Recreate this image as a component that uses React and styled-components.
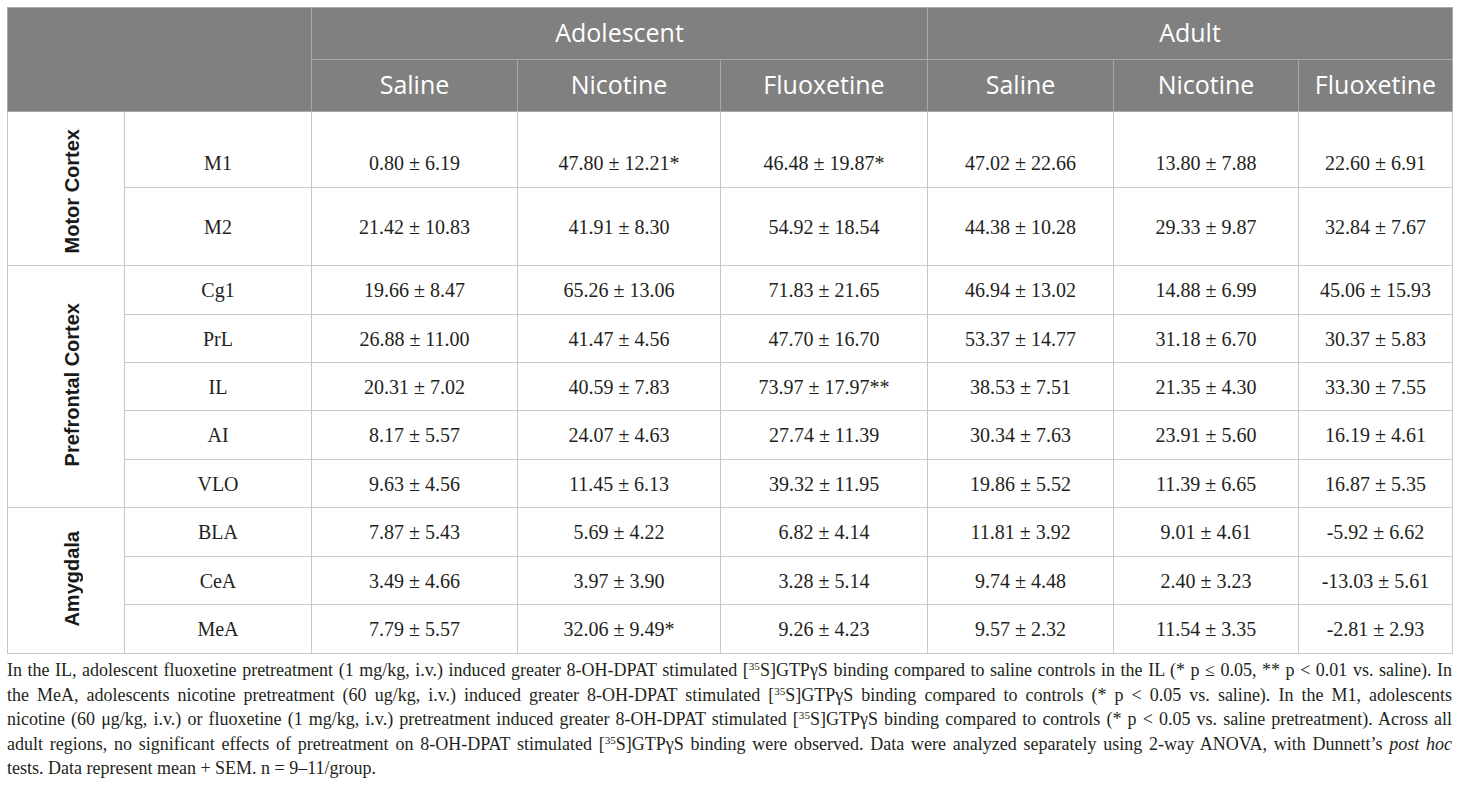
import React from "react";
import styled, { createGlobalStyle } from "styled-components";

const GlobalStyle = createGlobalStyle`
  html, body { margin: 0; padding: 0; background: #ffffff; }
  body { font-family: "Liberation Serif", "Times New Roman", serif; }
`;

const Page = styled.div`
  padding: 7px 8px 0 7px;
  width: 1445px;
`;

const Table = styled.table`
  width: 1445px;
  border-collapse: collapse;
  table-layout: fixed;
`;

const HeadCell = styled.th`
  background: #808080;
  color: #ffffff;
  font-family: "Open Sans", "Noto Sans", sans-serif;
  font-weight: 400;
  font-size: 25px;
  line-height: 30px;
  text-align: center;
  vertical-align: middle;
  border: 1px solid #a8a8a8;
  padding: 0 0 4px 0;
`;

const HeadRow = styled.tr`
  height: 52px;
`;

const BodyRow = styled.tr`
  height: ${(p) => p.$h}px;
  & > td {
    vertical-align: ${(p) => (p.$lower ? "bottom" : "middle")};
    padding-bottom: ${(p) => (p.$lower ? "12px" : "0")};
  }
`;

const GroupCell = styled.th`
  border: 1px solid #c8c8c8;
  padding: ${(p) => p.$shift || 0}px 0 0 13px;
  text-align: center;
  vertical-align: middle;
`;

const GroupLabel = styled.span`
  display: inline-block;
  writing-mode: vertical-rl;
  transform: rotate(180deg);
  font-family: "Liberation Sans", Arial, sans-serif;
  font-weight: 700;
  font-size: 20px;
  color: #1a1a1a;
  white-space: nowrap;
`;

const Cell = styled.td`
  border: 1px solid #c8c8c8;
  padding: 0;
  text-align: center;
  font-family: "Liberation Serif", "Times New Roman", serif;
  font-size: 20px;
  line-height: 24px;
  color: #231f20;
  white-space: nowrap;
`;

const Caption = styled.div`
  margin-top: 4px;
  font-family: "Liberation Serif", "Times New Roman", serif;
  font-size: 18px;
  line-height: 24.5px;
  color: #231f20;
`;

const Line = styled.div`
  white-space: nowrap;
  text-align: ${(p) => (p.$last ? "left" : "justify")};
  text-align-last: ${(p) => (p.$last ? "left" : "justify")};
`;

const Sup = styled.sup`
  font-size: 0.62em;
  line-height: 0;
  vertical-align: 0.55em;
`;

const cols = [117, 187, 206, 203, 207, 186, 185, 154];

const rows = [
  { group: "Motor Cortex", span: 2, shift: 10, region: "M1", h: 76, lower: true,
    v: ["0.80 ± 6.19", "47.80 ± 12.21*", "46.48 ± 19.87*", "47.02 ± 22.66", "13.80 ± 7.88", "22.60 ± 6.91"] },
  { region: "M2", h: 78,
    v: ["21.42 ± 10.83", "41.91 ± 8.30", "54.92 ± 18.54", "44.38 ± 10.28", "29.33 ± 9.87", "32.84 ± 7.67"] },
  { group: "Prefrontal Cortex", span: 5, shift: 0, region: "Cg1", h: 49,
    v: ["19.66 ± 8.47", "65.26 ± 13.06", "71.83 ± 21.65", "46.94 ± 13.02", "14.88 ± 6.99", "45.06 ± 15.93"] },
  { region: "PrL", h: 48,
    v: ["26.88 ± 11.00", "41.47 ± 4.56", "47.70 ± 16.70", "53.37 ± 14.77", "31.18 ± 6.70", "30.37 ± 5.83"] },
  { region: "IL", h: 48,
    v: ["20.31 ± 7.02", "40.59 ± 7.83", "73.97 ± 17.97**", "38.53 ± 7.51", "21.35 ± 4.30", "33.30 ± 7.55"] },
  { region: "AI", h: 49,
    v: ["8.17 ± 5.57", "24.07 ± 4.63", "27.74 ± 11.39", "30.34 ± 7.63", "23.91 ± 5.60", "16.19 ± 4.61"] },
  { region: "VLO", h: 48,
    v: ["9.63 ± 4.56", "11.45 ± 6.13", "39.32 ± 11.95", "19.86 ± 5.52", "11.39 ± 6.65", "16.87 ± 5.35"] },
  { group: "Amygdala", span: 3, shift: 0, region: "BLA", h: 49,
    v: ["7.87 ± 5.43", "5.69 ± 4.22", "6.82 ± 4.14", "11.81 ± 3.92", "9.01 ± 4.61", "-5.92 ± 6.62"] },
  { region: "CeA", h: 48,
    v: ["3.49 ± 4.66", "3.97 ± 3.90", "3.28 ± 5.14", "9.74 ± 4.48", "2.40 ± 3.23", "-13.03 ± 5.61"] },
  { region: "MeA", h: 49,
    v: ["7.79 ± 5.57", "32.06 ± 9.49*", "9.26 ± 4.23", "9.57 ± 2.32", "11.54 ± 3.35", "-2.81 ± 2.93"] },
];

const G = () => (
  <>
    [<Sup>35</Sup>S]GTPγS
  </>
);

export default function App() {
  return (
    <>
      <GlobalStyle />
      <Page>
        <Table>
          <colgroup>
            {cols.map((w, i) => (
              <col key={i} style={{ width: w }} />
            ))}
          </colgroup>
          <thead>
            <HeadRow>
              <HeadCell colSpan={2} rowSpan={2} />
              <HeadCell colSpan={3}>Adolescent</HeadCell>
              <HeadCell colSpan={3}>Adult</HeadCell>
            </HeadRow>
            <HeadRow>
              <HeadCell>Saline</HeadCell>
              <HeadCell>Nicotine</HeadCell>
              <HeadCell>Fluoxetine</HeadCell>
              <HeadCell>Saline</HeadCell>
              <HeadCell>Nicotine</HeadCell>
              <HeadCell>Fluoxetine</HeadCell>
            </HeadRow>
          </thead>
          <tbody>
            {rows.map((r) => (
              <BodyRow key={r.region} $h={r.h} $lower={r.lower}>
                {r.group && (
                  <GroupCell rowSpan={r.span} scope="rowgroup" $shift={r.shift}>
                    <GroupLabel>{r.group}</GroupLabel>
                  </GroupCell>
                )}
                <Cell>{r.region}</Cell>
                {r.v.map((val, i) => (
                  <Cell key={i}>{val}</Cell>
                ))}
              </BodyRow>
            ))}
          </tbody>
        </Table>
        <Caption>
          <Line>
            In the IL, adolescent fluoxetine pretreatment (1 mg/kg, i.v.) induced greater 8-OH-DPAT stimulated <G /> binding compared to saline controls in the IL (* p ≤ 0.05, ** p &lt; 0.01 vs. saline). In
          </Line>
          <Line>
            the MeA, adolescents nicotine pretreatment (60 ug/kg, i.v.) induced greater 8-OH-DPAT stimulated <G /> binding compared to controls (* p &lt; 0.05 vs. saline). In the M1, adolescents
          </Line>
          <Line>
            nicotine (60 μg/kg, i.v.) or fluoxetine (1 mg/kg, i.v.) pretreatment induced greater 8-OH-DPAT stimulated <G /> binding compared to controls (* p &lt; 0.05 vs. saline pretreatment). Across all
          </Line>
          <Line>
            adult regions, no significant effects of pretreatment on 8-OH-DPAT stimulated <G /> binding were observed. Data were analyzed separately using 2-way ANOVA, with Dunnett’s <i>post hoc</i>
          </Line>
          <Line $last>tests. Data represent mean + SEM. n = 9–11/group.</Line>
        </Caption>
      </Page>
    </>
  );
}
